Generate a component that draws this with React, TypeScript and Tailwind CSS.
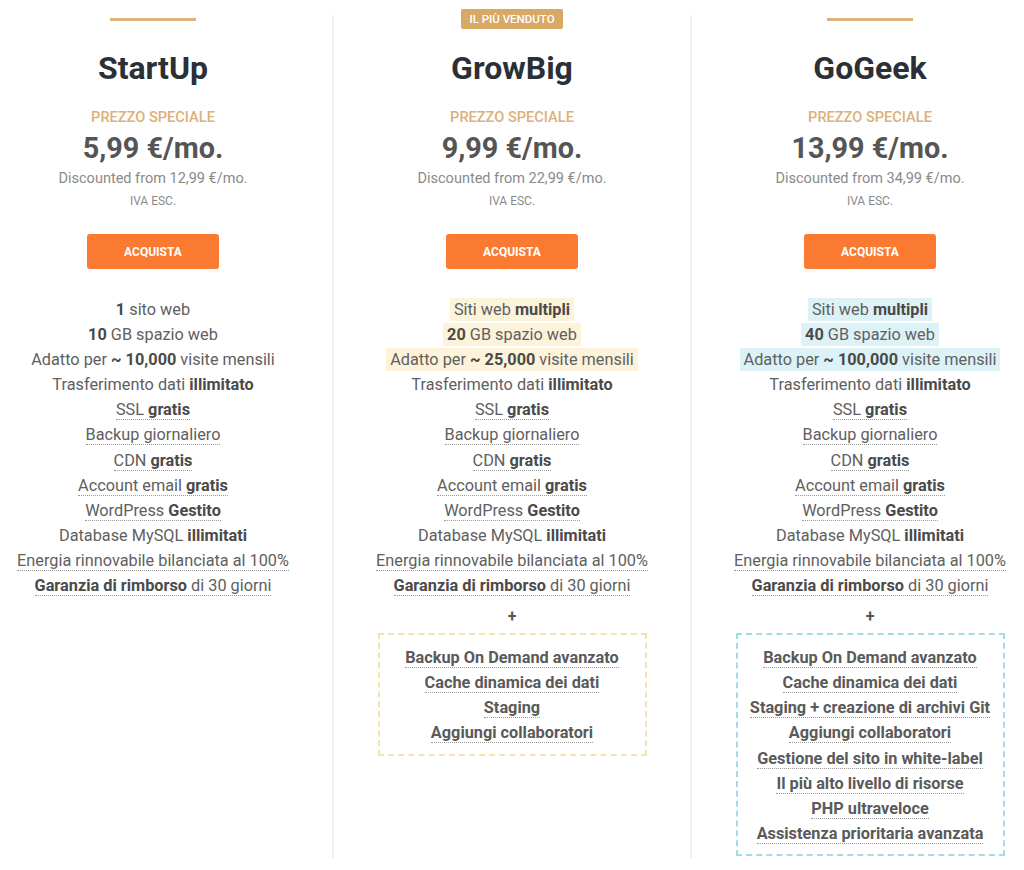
import React from "react";

type Seg = { t: string; b?: boolean };

interface Feature {
  segs: Seg[];
  dotted?: boolean;
  hl?: boolean;
}

interface Plan {
  name: string;
  price: string;
  was: string;
  top: "line" | "badge";
  theme?: "yellow" | "blue";
  features: Feature[];
  extras?: string[];
}

const common = (): Feature[] => [
  { segs: [{ t: "Trasferimento dati " }, { t: "illimitato", b: true }] },
  { segs: [{ t: "SSL " }, { t: "gratis", b: true }], dotted: true },
  { segs: [{ t: "Backup giornaliero" }], dotted: true },
  { segs: [{ t: "CDN " }, { t: "gratis", b: true }], dotted: true },
  { segs: [{ t: "Account email " }, { t: "gratis", b: true }], dotted: true },
  { segs: [{ t: "WordPress " }, { t: "Gestito", b: true }], dotted: true },
  { segs: [{ t: "Database MySQL " }, { t: "illimitati", b: true }] },
  { segs: [{ t: "Energia rinnovabile bilanciata al 100%" }], dotted: true },
  {
    segs: [{ t: "Garanzia di rimborso", b: true }, { t: " di 30 giorni" }],
    dotted: true,
  },
];

const plans: Plan[] = [
  {
    name: "StartUp",
    price: "5,99 €/mo.",
    was: "12,99 €/mo.",
    top: "line",
    features: [
      { segs: [{ t: "1", b: true }, { t: " sito web" }] },
      { segs: [{ t: "10", b: true }, { t: " GB spazio web" }] },
      {
        segs: [
          { t: "Adatto per " },
          { t: "~ 10,000", b: true },
          { t: " visite mensili" },
        ],
      },
      ...common(),
    ],
  },
  {
    name: "GrowBig",
    price: "9,99 €/mo.",
    was: "22,99 €/mo.",
    top: "badge",
    theme: "yellow",
    features: [
      { segs: [{ t: "Siti web " }, { t: "multipli", b: true }], hl: true },
      { segs: [{ t: "20", b: true }, { t: " GB spazio web" }], hl: true },
      {
        segs: [
          { t: "Adatto per " },
          { t: "~ 25,000", b: true },
          { t: " visite mensili" },
        ],
        hl: true,
      },
      ...common(),
    ],
    extras: [
      "Backup On Demand avanzato",
      "Cache dinamica dei dati",
      "Staging",
      "Aggiungi collaboratori",
    ],
  },
  {
    name: "GoGeek",
    price: "13,99 €/mo.",
    was: "34,99 €/mo.",
    top: "line",
    theme: "blue",
    features: [
      { segs: [{ t: "Siti web " }, { t: "multipli", b: true }], hl: true },
      { segs: [{ t: "40", b: true }, { t: " GB spazio web" }], hl: true },
      {
        segs: [
          { t: "Adatto per " },
          { t: "~ 100,000", b: true },
          { t: " visite mensili" },
        ],
        hl: true,
      },
      ...common(),
    ],
    extras: [
      "Backup On Demand avanzato",
      "Cache dinamica dei dati",
      "Staging + creazione di archivi Git",
      "Aggiungi collaboratori",
      "Gestione del sito in white-label",
      "Il più alto livello di risorse",
      "PHP ultraveloce",
      "Assistenza prioritaria avanzata",
    ],
  },
];

const FeatureRow: React.FC<{ f: Feature; theme?: Plan["theme"] }> = ({
  f,
  theme,
}) => {
  const hlClass =
    f.hl && theme === "yellow"
      ? "bg-[#fcf3da] px-1 py-[2px]"
      : f.hl && theme === "blue"
        ? "bg-[#ddf2f7] px-1 py-[2px]"
        : "";
  const dotClass = f.dotted ? "border-b border-dotted border-[#9a9a9a]" : "";
  return (
    <div className="h-[25.1px] leading-[25px] text-[16.3px] text-[#606060] whitespace-nowrap">
      <span className={`${hlClass} ${dotClass}`}>
        {f.segs.map((s, i) =>
          s.b ? (
            <strong key={i} className="font-bold text-[#4a4a4a]">
              {s.t}
            </strong>
          ) : (
            <span key={i}>{s.t}</span>
          ),
        )}
      </span>
    </div>
  );
};

const PlanColumn: React.FC<{ plan: Plan; first: boolean }> = ({
  plan,
  first,
}) => {
  const boxBorder =
    plan.theme === "yellow" ? "border-[#f3e3ad]" : "border-[#a6dbe5]";
  return (
    <div
      className={`w-[358px] shrink-0 flex flex-col items-center ${
        first ? "" : "border-l-2 border-[#f0f0f0]"
      }`}
    >
      <div className="h-[20px] flex justify-center items-start">
        {plan.top === "line" ? (
          <div className="mt-[3px] h-[3px] w-[86px] bg-[#dcb37c]" />
        ) : (
          <div className="-mt-[6px] h-[20px] px-[8px] rounded-[2px] bg-[#d7a964] text-white text-[11.5px] leading-[20px] font-medium uppercase">
            Il più venduto
          </div>
        )}
      </div>

      <h2 className="mt-[15px] text-[32px] leading-[36px] font-bold text-[#2b3036]">
        {plan.name}
      </h2>
      <div className="mt-[21px] text-[14.6px] leading-[20px] font-medium text-[#dcb07a] uppercase">
        Prezzo speciale
      </div>
      <div className="mt-[5px] text-[28.8px] leading-[32px] font-bold text-[#555555]">
        {plan.price}
      </div>
      <div className="mt-[5px] text-[14.5px] leading-[20px] text-[#8a8a8a]">
        Discounted from {plan.was}
      </div>
      <div className="mt-[4px] text-[12px] leading-[16px] text-[#8a8a8a]">
        IVA ESC.
      </div>
      <button className="mt-[25px] h-[35px] w-[132px] rounded-[3px] bg-[#fb7a31] text-white text-[12px] font-bold uppercase">
        Acquista
      </button>

      <div className="mt-[28px] flex flex-col items-center">
        {plan.features.map((f, i) => (
          <FeatureRow key={i} f={f} theme={plan.theme} />
        ))}
      </div>

      {plan.extras && (
        <>
          <div className="mt-[9px] h-[20px] leading-[20px] text-[16px] font-bold text-[#555]">
            +
          </div>
          <div
            className={`mt-[6px] w-[269px] border-2 border-dashed ${boxBorder} pt-[10px] pb-[8px] flex flex-col items-center`}
          >
            {plan.extras.map((e) => (
              <div
                key={e}
                className="h-[25.1px] leading-[25px] text-[16.3px] font-bold text-[#5a5a5a] whitespace-nowrap"
              >
                <span className="border-b border-dotted border-[#9a9a9a]">
                  {e}
                </span>
              </div>
            ))}
          </div>
        </>
      )}
      <div className="h-[2px]" />
    </div>
  );
};

export default function App() {
  return (
    <div className="w-full min-h-[870px] bg-white overflow-hidden font-['Roboto',sans-serif]">
      <div className="pt-[15px] -ml-[26px] w-[1074px] flex items-stretch">
        {plans.map((p, i) => (
          <PlanColumn key={p.name} plan={p} first={i === 0} />
        ))}
      </div>
    </div>
  );
}
